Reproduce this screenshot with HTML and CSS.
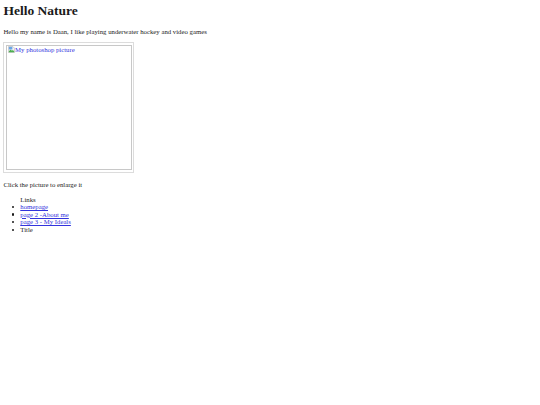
FILE: index.html
```html
<!DOCTYPE html>
<html lang="en">
<head>
    <meta charset="UTF-8">
    <title>Hello Nature</title>
    <link rel="stylesheet" href="styles.css">
</head>
<body>

    <h1 class="title">Hello Nature</h1>

    <p>Hello my name is Daan, I like playing underwater hockey and video games</p>

    <!-- picture (broken image with alt text) -->
    <div class="photo-row">
        <a class="photo" href="#">
            <span class="photo-inner">
                <svg class="broken" width="7" height="7" viewBox="0 0 16 16">
                    <path d="M1 1h10l4 4v10H1z" fill="#f2f2f2" stroke="#9a9a9a"/>
                    <path d="M2 12l4-4 3 3 2-2 3 3v2H2z" fill="#4caf50"/>
                    <path d="M2 2h8v6H2z" fill="#6aa7e8"/>
                </svg>My photoshop picture
            </span>
        </a>
    </div>

    <p>Click the picture to enlarge it</p>

    <ul class="links">
        Links
        <li><a href="#">homepage</a></li>
        <li><a href="#">page 2 -About me</a></li>
        <li><a href="#">page 3 - My Ideals</a></li>
        <li>Title</li>
    </ul>

</body>
</html>
```

FILE: styles.css
```css
body {
    font-family: 'Liberation Serif', 'Times New Roman', serif;
    font-size: 6.75px;
    line-height: 7.6px;
    margin: 0 3.4px;
    color: #1a1a1a;
    background-color: #fff;
}

a {
    color: #3333dd;
}

.title {
    font-size: 13.5px;
    line-height: 16px;
    font-weight: bold;
    margin: 3px 0 8.5px;
}

p {
    margin: 6.75px 0;
}

.photo-row {
    padding-bottom: 1.6px;
}

.photo {
    display: block;
    box-sizing: border-box;
    width: 131px;
    height: 131px;
    padding: 1.7px;
    border: 1px solid #dcdcdc;
    text-decoration: none;
}

.photo-inner {
    display: block;
    box-sizing: border-box;
    height: 100%;
    border: 1px solid #c8c8c8;
    padding: 0 1px;
    color: #3333dd;
}

.broken {
    vertical-align: -1px;
}

.links {
    margin: 6.75px 0;
    padding-left: 16.9px;
}

.links li {
    list-style: none;
}

.links li::before {
    content: "";
    display: inline-block;
    width: 2.2px;
    height: 2.2px;
    border-radius: 50%;
    background-color: #1a1a1a;
    margin-left: -8px;
    margin-right: 5.8px;
    vertical-align: 1.2px;
}
```
